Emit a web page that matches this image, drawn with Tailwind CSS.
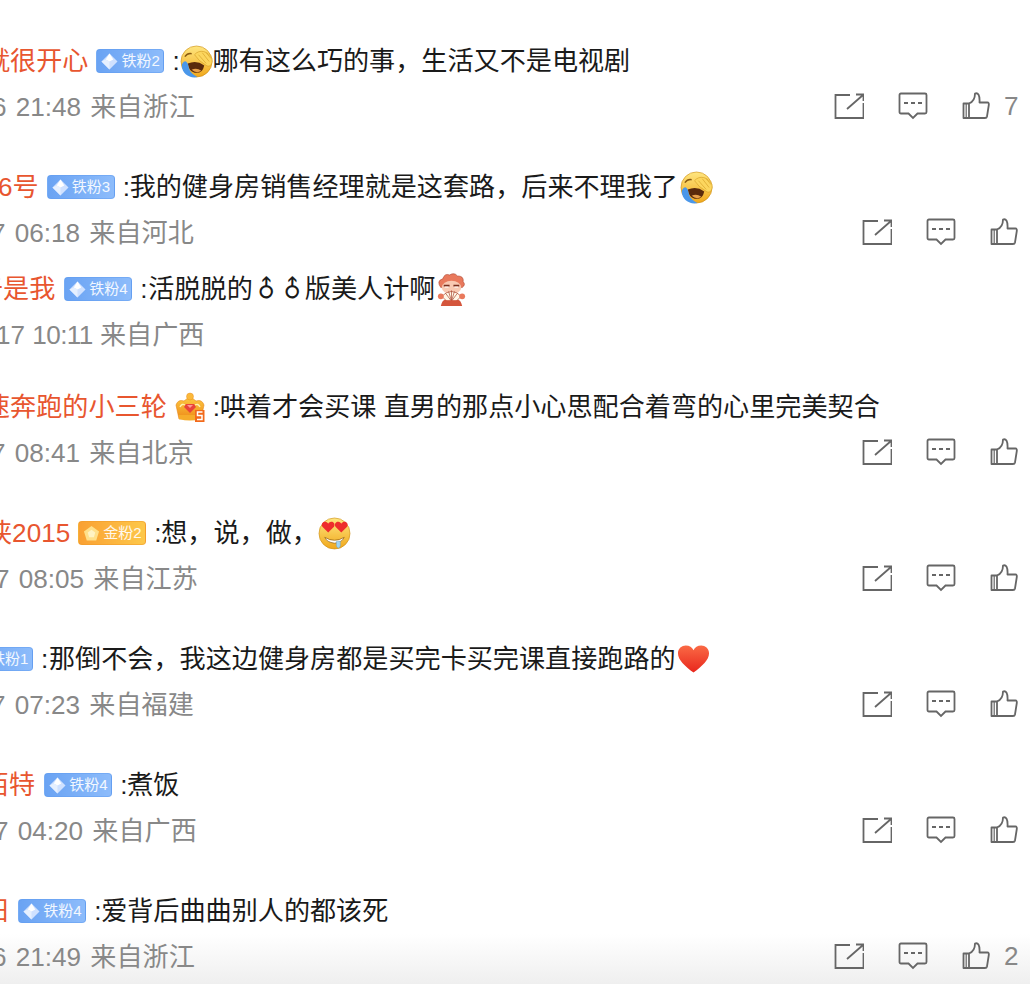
<!doctype html>
<html lang="zh"><head><meta charset="utf-8">
<script src="https://cdn.jsdelivr.net/npm/@tailwindcss/browser@4"></script>
<title>评论</title></head>
<body class="bg-white">
<div class="relative w-[1030px] h-[984px] overflow-hidden bg-white text-[26.12px] leading-[36px] text-[#1a1a1a] font-['Liberation_Sans','Noto_Sans_CJK_SC',sans-serif]">
<svg width="0" height="0" class="absolute">
<defs>
<linearGradient id="fy" x1="0" y1="0" x2="0" y2="1"><stop offset="0" stop-color="#ffe680"/><stop offset="1" stop-color="#f0a81c"/></linearGradient>
<linearGradient id="hr" x1="0" y1="0" x2="0" y2="1"><stop offset="0" stop-color="#fa6a45"/><stop offset="1" stop-color="#e8261c"/></linearGradient>
<linearGradient id="cr" x1="0" y1="0" x2="0" y2="1"><stop offset="0" stop-color="#fcc740"/><stop offset="1" stop-color="#ee8a18"/></linearGradient>
<symbol id="share" viewBox="0 0 30 26"><path d="M16 2H1.500V25H29.500V10M13 16L29 2M22 1.500H29.500V8" fill="none" stroke="#666" stroke-width="1.800"/></symbol>
<symbol id="comment" viewBox="0 0 30 28"><path d="M3 1.500H27Q28.500 1.500 28.500 3V20Q28.500 21.500 27 21.500H19.500L15 26L10.500 21.500H3Q1.500 21.500 1.500 20V3Q1.500 1.500 3 1.500Z" fill="none" stroke="#666" stroke-width="1.800"/><path d="M6 11H24" stroke="#666" stroke-width="1.800" stroke-dasharray="4 3"/></symbol>
<symbol id="thumb" viewBox="0 0 28 28"><path d="M7 11.500H1.500V26H7ZM7 11.500C11 10 13 6 13 1.500C16 .5 18 3 17.500 10.500H25.500C26.500 10.500 27 11.500 26.800 13L25 24.500C24.800 25.500 24 26 23 26H7" fill="none" stroke="#666" stroke-width="1.800" stroke-linejoin="round"/><path d="M4.200 12V26" stroke="#666" stroke-width="1.200"/></symbol>
<symbol id="gem" viewBox="0 0 18 18"><path d="M9 .5L17.500 9L9 17.500L.5 9Z" fill="#cfe1ff"/><path d="M9 .5L13 7L9 9L5 7Z" fill="#fff"/><path d="M5 7L9 9V17.500L.5 9Z" fill="#e6f0ff"/></symbol>
<symbol id="gold" viewBox="0 0 18 18"><path d="M9 1L17 7L14 16.500H4L1 7Z" fill="#ffe08a"/><path d="M9 5L13 8L11.500 13H6.500L5 8Z" fill="#fff3c4"/></symbol>
<symbol id="cry" viewBox="0 0 34 34"><circle cx="17" cy="17" r="16" fill="url(#fy)" stroke="#c98a10" stroke-width=".6"/><path d="M8 19Q17 15 25 21Q23 30 15 28.500Q9 27 8 19Z" fill="#5a2a0c"/><path d="M12 25.500Q17 23 22 26.500Q17 30 12 25.500Z" fill="#e8a04a"/><path d="M2 20C5 14 8 17 9 23C10 28 13 30 18 33C10 35 1 29 2 20Z" fill="#4a97ea"/><path d="M15 10C20 4 29 6 33 14C34 21 30 23 27 21L20 16Z" fill="#fcd65e" stroke="#d09a20" stroke-width=".6"/><path d="M19 10L27 19M23 8L30 17M27 8L32 14" stroke="#d09a20" stroke-width=".6"/><path d="M5 12Q8 8 12 9" stroke="#8a5a10" stroke-width="1.500" fill="none"/></symbol>
<symbol id="fan" viewBox="0 0 34 34"><path d="M6 15Q1 8 8 6Q10 0 15 2Q20 -1 23 3Q30 3 29 9Q32 12 28 15Z" fill="#e9795c" stroke="#a8442e" stroke-width=".6"/><ellipse cx="17" cy="15" rx="10" ry="7" fill="#f8c9b2"/><path d="M9 13H15M19 13H25" stroke="#7a2e1e" stroke-width="1.600"/><path d="M10 14.500H14M20 14.500H24" stroke="#fff" stroke-width="1"/><path d="M7 24Q17 14 27 24L22 29H12Z" fill="#fff6e6" stroke="#a8442e" stroke-width=".7"/><path d="M17 29L11 21M17 29L14 19M17 29V18M17 29L20 19M17 29L23 21" stroke="#a8442e" stroke-width=".7"/><path d="M6 34Q8 26 12 28L22 28Q26 26 28 34Z" fill="#d4553c"/><circle cx="6" cy="24" r="3" fill="#e9795c"/><circle cx="28" cy="24" r="3" fill="#e9795c"/></symbol>
<symbol id="crown" viewBox="0 0 30 30"><path d="M4 27L1 13Q3 7 9 9Q12 6 15 6Q18 6 21 9Q27 7 29 13L26 27Z" fill="url(#cr)" stroke="#e8861a" stroke-width=".6"/><path d="M5 15Q7 11 10 13M25 15Q23 11 20 13" fill="none" stroke="#fff2b0" stroke-width="1.400"/><circle cx="15" cy="4.500" r="3.500" fill="#fbb93a" stroke="#e8861a" stroke-width=".4"/><path d="M11 12H19L21 15L15 21L9 15Z" fill="#e8433a"/><path d="M12 13H18L15 16Z" fill="#ff9a90"/><path d="M4 23H26V27Q15 30 4 27Z" fill="#f6ac2a"/><path d="M20 18H29.500V30H20Z" fill="#f26a1b"/><path d="M27.500 20H22.500V23.500H27V27.500H22" fill="none" stroke="#fff" stroke-width="1.500"/></symbol>
<symbol id="love" viewBox="0 0 34 34"><circle cx="17" cy="17" r="16" fill="url(#fy)" stroke="#c98a10" stroke-width=".6"/><path d="M10.500 16L4.500 10C3 7.500 5 4.500 7.500 5C9 5.200 10 6 10.500 7C11 6 12 5.200 13.500 5C16 4.500 18 7.500 16.500 10Z" fill="#ee2d2d"/><path d="M24 16L18 10C16.500 7.500 18.500 4.500 21 5C22.500 5.200 23.500 6 24 7C24.500 6 25.500 5.200 27 5C29.500 4.500 31.500 7.500 30 10Z" fill="#ee2d2d"/><path d="M7 21Q17 27 27 21Q25 26 17 27Q9 26 7 21Z" fill="#fff" stroke="#8a5a10" stroke-width=".7"/><path d="M19 25H23V30Q21 34 19 30Z" fill="#9fd4f5" stroke="#5b9ccc" stroke-width=".4"/></symbol>
<symbol id="heart" viewBox="0 0 34 30"><path d="M17 29C8 22 1 16 1 9C1 4 5 1 9 1C13 1 15.500 3 17 6C18.500 3 21 1 25 1C29 1 33 4 33 9C33 16 26 22 17 29Z" fill="url(#hr)"/></symbol>
</defs></svg>

<div class="absolute inset-x-0 bottom-0 h-[50px] bg-linear-to-b from-white to-[#efefef]"></div>
<div class="absolute left-[3px] -top-[30px] whitespace-nowrap text-[#666]">来自</div>

<!-- row 1 -->
<section class="relative pt-[43px]">
<div class="flex items-center h-[36px] -ml-[16px] whitespace-nowrap">
<span class="text-[#e8562f]">就很开心</span>
<span class="ml-[8px] flex items-center w-[68px] h-[24px] rounded-[4px] border border-[#5f9cf0]/50 bg-linear-to-r from-[#6aa3f3] to-[#8dbcfb] pl-[4px] text-[15px] text-white/90"><svg class="w-[17px] h-[17px] mr-[3px]"><use href="#gem"/></svg>铁粉2</span>
<span class="ml-[8px] w-[7px]">:</span><svg class="ml-[1px] -mr-[1px] w-[33px] h-[33px]"><use href="#cry"/></svg><span>哪有这么巧的事，生活又不是电视剧</span>
</div>
<div class="flex justify-between items-center h-[36px] mt-[10px]">
<span class="-ml-[8px] text-[#888] whitespace-nowrap [word-spacing:2px]">6 21:48 来自浙江</span>
<div class="flex items-center pr-[10px] pb-[2px] text-[#888]"><svg class="w-[30px] h-[26px]"><use href="#share"/></svg><svg class="ml-[34px] w-[30px] h-[28px]"><use href="#comment"/></svg><svg class="ml-[34px] w-[28px] h-[28px]"><use href="#thumb"/></svg><span class="ml-[14px] w-[16px]">7</span></div>
</div>
</section>

<!-- row 2 -->
<section class="relative pt-[44px]">
<div class="flex items-center h-[36px] -ml-[2px] whitespace-nowrap">
<span class="text-[#e8562f]">6号</span>
<span class="ml-[8px] flex items-center w-[68px] h-[24px] rounded-[4px] border border-[#5f9cf0]/50 bg-linear-to-r from-[#6aa3f3] to-[#8dbcfb] pl-[4px] text-[15px] text-white/90"><svg class="w-[17px] h-[17px] mr-[3px]"><use href="#gem"/></svg>铁粉3</span>
<span class="ml-[8px] w-[7px]">:</span><span>我的健身房销售经理就是这套路，后来不理我了</span><svg class="ml-[2px] w-[33px] h-[33px]"><use href="#cry"/></svg>
</div>
<div class="flex justify-between items-center h-[36px] mt-[10px]">
<span class="-ml-[9px] text-[#888] whitespace-nowrap [word-spacing:2px]">7 06:18 来自河北</span>
<div class="flex items-center pr-[12px] pb-[2px]"><svg class="w-[30px] h-[26px]"><use href="#share"/></svg><svg class="ml-[34px] w-[30px] h-[28px]"><use href="#comment"/></svg><svg class="ml-[34px] w-[28px] h-[28px]"><use href="#thumb"/></svg></div>
</div>
</section>

<!-- row 3 -->
<section class="relative pt-[20px]">
<div class="flex items-center h-[36px] -ml-[23px] whitespace-nowrap">
<span class="text-[#e8562f]">于是我</span>
<span class="ml-[9px] flex items-center w-[68px] h-[24px] rounded-[4px] border border-[#5f9cf0]/50 bg-linear-to-r from-[#6aa3f3] to-[#8dbcfb] pl-[4px] text-[15px] text-white/90"><svg class="w-[17px] h-[17px] mr-[3px]"><use href="#gem"/></svg>铁粉4</span>
<span class="ml-[8px] w-[8px]">:</span><span>活脱脱的</span><span class="inline-block w-[27px] text-center -rotate-45 font-['DejaVu_Sans'] text-[24px]">♂</span><span class="inline-block w-[25px] text-center -rotate-45 font-['DejaVu_Sans'] text-[24px]">♂</span><span>版美人计啊</span><svg class="w-[33px] h-[33px]"><use href="#fan"/></svg>
</div>
<div class="h-[36px] mt-[10px] -ml-[4px] flex items-center text-[#888] whitespace-nowrap"><span>17 <span class="tracking-[-0.6px]">10:11</span> 来自广西</span></div>
</section>

<!-- row 4 -->
<section class="relative pt-[36px]">
<div class="flex items-center h-[36px] -ml-[16px] whitespace-nowrap">
<span class="text-[#e8562f]">速奔跑的小三轮</span>
<svg class="ml-[8px] w-[30px] h-[30px]"><use href="#crown"/></svg>
<span class="ml-[8px] w-[7px]">:</span><span>哄着才会买课 直男的那点小心思配合着弯的心里完美契合</span>
</div>
<div class="flex justify-between items-center h-[36px] mt-[10px]">
<span class="-ml-[9px] text-[#888] whitespace-nowrap [word-spacing:2px]">7 08:41 来自北京</span>
<div class="flex items-center pr-[12px] pb-[2px]"><svg class="w-[30px] h-[26px]"><use href="#share"/></svg><svg class="ml-[34px] w-[30px] h-[28px]"><use href="#comment"/></svg><svg class="ml-[34px] w-[28px] h-[28px]"><use href="#thumb"/></svg></div>
</div>
</section>

<!-- row 5 -->
<section class="relative pt-[44px]">
<div class="flex items-center h-[36px] -ml-[14px] whitespace-nowrap">
<span class="text-[#e8562f]">侠2015</span>
<span class="ml-[8px] flex items-center w-[68px] h-[24px] rounded-[4px] border border-[#f09a28]/50 bg-linear-to-r from-[#f9a033] to-[#fdc84a] pl-[4px] text-[15px] text-white/90"><svg class="w-[17px] h-[17px] mr-[3px]"><use href="#gold"/></svg>金粉2</span>
<span class="ml-[8px] w-[7px]">:</span><span>想，说，做，</span><svg class="w-[33px] h-[33px]"><use href="#love"/></svg>
</div>
<div class="flex justify-between items-center h-[36px] mt-[10px]">
<span class="-ml-[5px] text-[#888] whitespace-nowrap [word-spacing:2px]">7 08:05 来自江苏</span>
<div class="flex items-center pr-[12px] pb-[2px]"><svg class="w-[30px] h-[26px]"><use href="#share"/></svg><svg class="ml-[34px] w-[30px] h-[28px]"><use href="#comment"/></svg><svg class="ml-[34px] w-[28px] h-[28px]"><use href="#thumb"/></svg></div>
</div>
</section>

<!-- row 6 -->
<section class="relative pt-[44px]">
<div class="flex items-center h-[36px] -ml-[35px] whitespace-nowrap">
<span class="flex items-center w-[68px] h-[24px] rounded-[4px] border border-[#5f9cf0]/50 bg-linear-to-r from-[#6aa3f3] to-[#8dbcfb] pl-[4px] text-[15px] text-white/90"><svg class="w-[17px] h-[17px] mr-[3px]"><use href="#gem"/></svg>铁粉1</span>
<span class="ml-[8px] w-[8px]">:</span><span>那倒不会，我这边健身房都是买完卡买完课直接跑路的</span><svg class="ml-[1px] w-[33px] h-[30px]"><use href="#heart"/></svg>
</div>
<div class="flex justify-between items-center h-[36px] mt-[10px]">
<span class="-ml-[9px] text-[#888] whitespace-nowrap [word-spacing:2px]">7 07:23 来自福建</span>
<div class="flex items-center pr-[12px] pb-[2px]"><svg class="w-[30px] h-[26px]"><use href="#share"/></svg><svg class="ml-[34px] w-[30px] h-[28px]"><use href="#comment"/></svg><svg class="ml-[34px] w-[28px] h-[28px]"><use href="#thumb"/></svg></div>
</div>
</section>

<!-- row 7 -->
<section class="relative pt-[44px]">
<div class="flex items-center h-[36px] -ml-[17px] whitespace-nowrap">
<span class="text-[#e8562f]">佰特</span>
<span class="ml-[9px] flex items-center w-[68px] h-[24px] rounded-[4px] border border-[#5f9cf0]/50 bg-linear-to-r from-[#6aa3f3] to-[#8dbcfb] pl-[4px] text-[15px] text-white/90"><svg class="w-[17px] h-[17px] mr-[3px]"><use href="#gem"/></svg>铁粉4</span>
<span class="ml-[8px] w-[7px]">:</span><span>煮饭</span>
</div>
<div class="flex justify-between items-center h-[36px] mt-[10px]">
<span class="-ml-[6px] text-[#888] whitespace-nowrap [word-spacing:2px]">7 04:20 来自广西</span>
<div class="flex items-center pr-[12px] pb-[2px]"><svg class="w-[30px] h-[26px]"><use href="#share"/></svg><svg class="ml-[34px] w-[30px] h-[28px]"><use href="#comment"/></svg><svg class="ml-[34px] w-[28px] h-[28px]"><use href="#thumb"/></svg></div>
</div>
</section>

<!-- row 8 -->
<section class="relative pt-[44px]">
<div class="flex items-center h-[36px] -ml-[17px] whitespace-nowrap">
<span class="text-[#e8562f]">旧</span>
<span class="ml-[9px] flex items-center w-[68px] h-[24px] rounded-[4px] border border-[#5f9cf0]/50 bg-linear-to-r from-[#6aa3f3] to-[#8dbcfb] pl-[4px] text-[15px] text-white/90"><svg class="w-[17px] h-[17px] mr-[3px]"><use href="#gem"/></svg>铁粉4</span>
<span class="ml-[8px] w-[7px]">:</span><span>爱背后曲曲别人的都该死</span>
</div>
<div class="flex justify-between items-center h-[36px] mt-[10px]">
<span class="-ml-[8px] text-[#888] whitespace-nowrap [word-spacing:2px]">6 21:49 来自浙江</span>
<div class="flex items-center pr-[10px] pb-[2px] text-[#888]"><svg class="w-[30px] h-[26px]"><use href="#share"/></svg><svg class="ml-[34px] w-[30px] h-[28px]"><use href="#comment"/></svg><svg class="ml-[34px] w-[28px] h-[28px]"><use href="#thumb"/></svg><span class="ml-[14px] w-[16px]">2</span></div>
</div>
</section>
</div>
</body></html>
